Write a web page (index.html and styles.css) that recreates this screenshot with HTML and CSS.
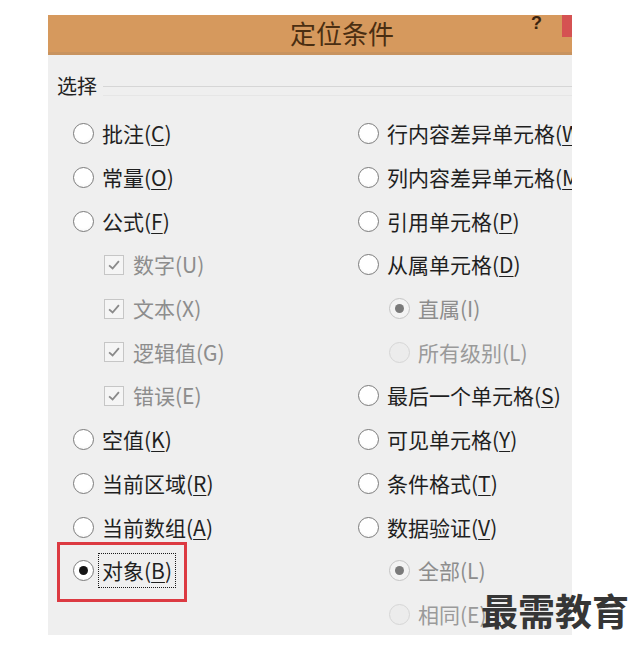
FILE: index.html
```html
<!DOCTYPE html>
<html lang="zh-CN">
<head>
<meta charset="utf-8">
<title>定位条件</title>
<link rel="stylesheet" href="styles.css">
</head>
<body>
<div class="dialog">
  <div class="titlebar">
    <span class="title">定位条件</span>
    <span class="help">?</span>
    <span class="close"></span>
  </div>
  <div class="content">
    <div class="legend"><span>选择</span><span class="rule"></span></div>
    <div class="cols">
      <div class="col">
        <div class="opt"><span class="radio"></span><span class="lbl">批注(<u>C</u>)</span></div>
        <div class="opt"><span class="radio"></span><span class="lbl">常量(<u>O</u>)</span></div>
        <div class="opt"><span class="radio"></span><span class="lbl">公式(<u>F</u>)</span></div>
        <div class="opt sub dis"><span class="check"><svg viewBox="0 0 20 20" width="14" height="14"><path d="M3 10.5 L8 15 L17 4.5" fill="none" stroke="#8a8a8a" stroke-width="2.6"/></svg></span><span class="lbl">数字(U)</span></div>
        <div class="opt sub dis"><span class="check"><svg viewBox="0 0 20 20" width="14" height="14"><path d="M3 10.5 L8 15 L17 4.5" fill="none" stroke="#8a8a8a" stroke-width="2.6"/></svg></span><span class="lbl">文本(X)</span></div>
        <div class="opt sub dis"><span class="check"><svg viewBox="0 0 20 20" width="14" height="14"><path d="M3 10.5 L8 15 L17 4.5" fill="none" stroke="#8a8a8a" stroke-width="2.6"/></svg></span><span class="lbl">逻辑值(G)</span></div>
        <div class="opt sub dis"><span class="check"><svg viewBox="0 0 20 20" width="14" height="14"><path d="M3 10.5 L8 15 L17 4.5" fill="none" stroke="#8a8a8a" stroke-width="2.6"/></svg></span><span class="lbl">错误(E)</span></div>
        <div class="opt"><span class="radio"></span><span class="lbl">空值(<u>K</u>)</span></div>
        <div class="opt"><span class="radio"></span><span class="lbl">当前区域(<u>R</u>)</span></div>
        <div class="opt"><span class="radio"></span><span class="lbl">当前数组(<u>A</u>)</span></div>
        <div class="opt"><span class="radio on"></span><span class="lbl focus">对象(<u>B</u>)</span></div>
      </div>
      <div class="col">
        <div class="opt"><span class="radio"></span><span class="lbl">行内容差异单元格(<u>W</u>)</span></div>
        <div class="opt"><span class="radio"></span><span class="lbl">列内容差异单元格(<u>M</u>)</span></div>
        <div class="opt"><span class="radio"></span><span class="lbl">引用单元格(<u>P</u>)</span></div>
        <div class="opt"><span class="radio"></span><span class="lbl">从属单元格(<u>D</u>)</span></div>
        <div class="opt sub dis"><span class="radio on"></span><span class="lbl">直属(I)</span></div>
        <div class="opt sub dis off"><span class="radio"></span><span class="lbl">所有级别(L)</span></div>
        <div class="opt"><span class="radio"></span><span class="lbl">最后一个单元格(<u>S</u>)</span></div>
        <div class="opt"><span class="radio"></span><span class="lbl">可见单元格(<u>Y</u>)</span></div>
        <div class="opt"><span class="radio"></span><span class="lbl">条件格式(<u>T</u>)</span></div>
        <div class="opt"><span class="radio"></span><span class="lbl">数据验证(<u>V</u>)</span></div>
        <div class="opt sub dis"><span class="radio on"></span><span class="lbl">全部(L)</span></div>
        <div class="opt sub dis off"><span class="radio"></span><span class="lbl">相同(E)</span></div>
      </div>
    </div>
  </div>
  <div class="mark"></div>
</div>
<div class="watermark">最需教育</div>
</body>
</html>
```
FILE: styles.css
```css
html, body {
  margin: 0;
  padding: 0;
  background: #ffffff;
}
body {
  position: relative;
  width: 632px;
  height: 647px;
  overflow: hidden;
  font-family: "Noto Sans CJK SC", "Noto Sans", sans-serif;
}
.dialog {
  position: relative;
  margin: 15px 0 0 48px;
  width: 524px;
  height: 620px;
  background: linear-gradient(#f4eeea 0, #f1eeec 11px, #efefef 12px);
  overflow: hidden;
}
.titlebar {
  display: flex;
  align-items: flex-start;
  height: 37px;
  background: #d6995d;
  border-bottom: 3px solid #c8935f;
}
.title {
  margin-left: 242px;
  margin-top: 1px;
  font-size: 26px;
  line-height: 34px;
  color: #4a2e12;
}
.help {
  margin-left: auto;
  margin-right: 20px;
  margin-top: -3px;
  font-family: "Liberation Sans", sans-serif;
  font-weight: bold;
  font-size: 18px;
  line-height: 22px;
  color: #3a2410;
}
.close {
  width: 10px;
  height: 22px;
  background: #d55252;
}
.content {
  padding: 20px 0 0 0;
}
.legend {
  display: flex;
  align-items: center;
  padding-left: 9px;
  height: 21px;
  font-size: 20px;
  line-height: 21px;
  color: #222;
}
.rule {
  flex: 1;
  margin-left: 6px;
  margin-top: 2px;
  height: 1px;
  background: #d6d6d6;
  box-shadow: 0 9px 0 #e6e6e6;
}
.cols {
  display: grid;
  grid-template-columns: 285px 1fr;
  padding-left: 25px;
  margin-top: 16px;
}
.col {
  display: flex;
  flex-direction: column;
}
.opt {
  display: flex;
  align-items: center;
  height: 43.7px;
  white-space: nowrap;
  font-size: 21px;
  line-height: 21px;
  color: #1f1f1f;
}
.opt u {
  text-decoration: underline;
  text-underline-offset: 3px;
  text-decoration-thickness: 1px;
}
.sub {
  padding-left: 31px;
}
.dis {
  color: #8d8d8d;
}
.radio {
  position: relative;
  flex: none;
  box-sizing: border-box;
  width: 21px;
  height: 21px;
  border-radius: 50%;
  border: 1.5px solid #7c7c7c;
  background: radial-gradient(circle at 50% 40%, #ffffff 55%, #f1f1f1 100%);
  margin-right: 8px;
}
.radio.on::after {
  content: "";
  position: absolute;
  left: 50%;
  top: 50%;
  width: 9px;
  height: 9px;
  margin: -4.5px 0 0 -4.5px;
  border-radius: 50%;
  background: #141414;
}
.dis .radio {
  border-color: #c4c4c4;
  background: #f3f3f3;
}
.dis .radio.on::after {
  background: #7a7a7a;
}
.off .radio {
  border-color: #d6d6d6;
  background: #ececec;
}
.off {
  color: #9a9a9a;
}
.check {
  flex: none;
  box-sizing: border-box;
  width: 20px;
  height: 20px;
  border: 1px solid #c6c6c6;
  background: #f5f5f5;
  display: flex;
  align-items: center;
  justify-content: center;
  margin-right: 9px;
}
.lbl.focus {
  padding: 6px 3px;
  margin-left: -4px;
  border: 1px dotted #1a1a1a;
}
.mark {
  position: absolute;
  left: 9px;
  top: 527px;
  width: 130px;
  height: 60px;
  box-sizing: border-box;
  border: 3px solid #dc3a42;
}
.watermark {
  position: absolute;
  left: 481px;
  top: 586px;
  font-size: 37px;
  line-height: 48px;
  font-weight: bold;
  color: #363636;
  white-space: nowrap;
}
```
